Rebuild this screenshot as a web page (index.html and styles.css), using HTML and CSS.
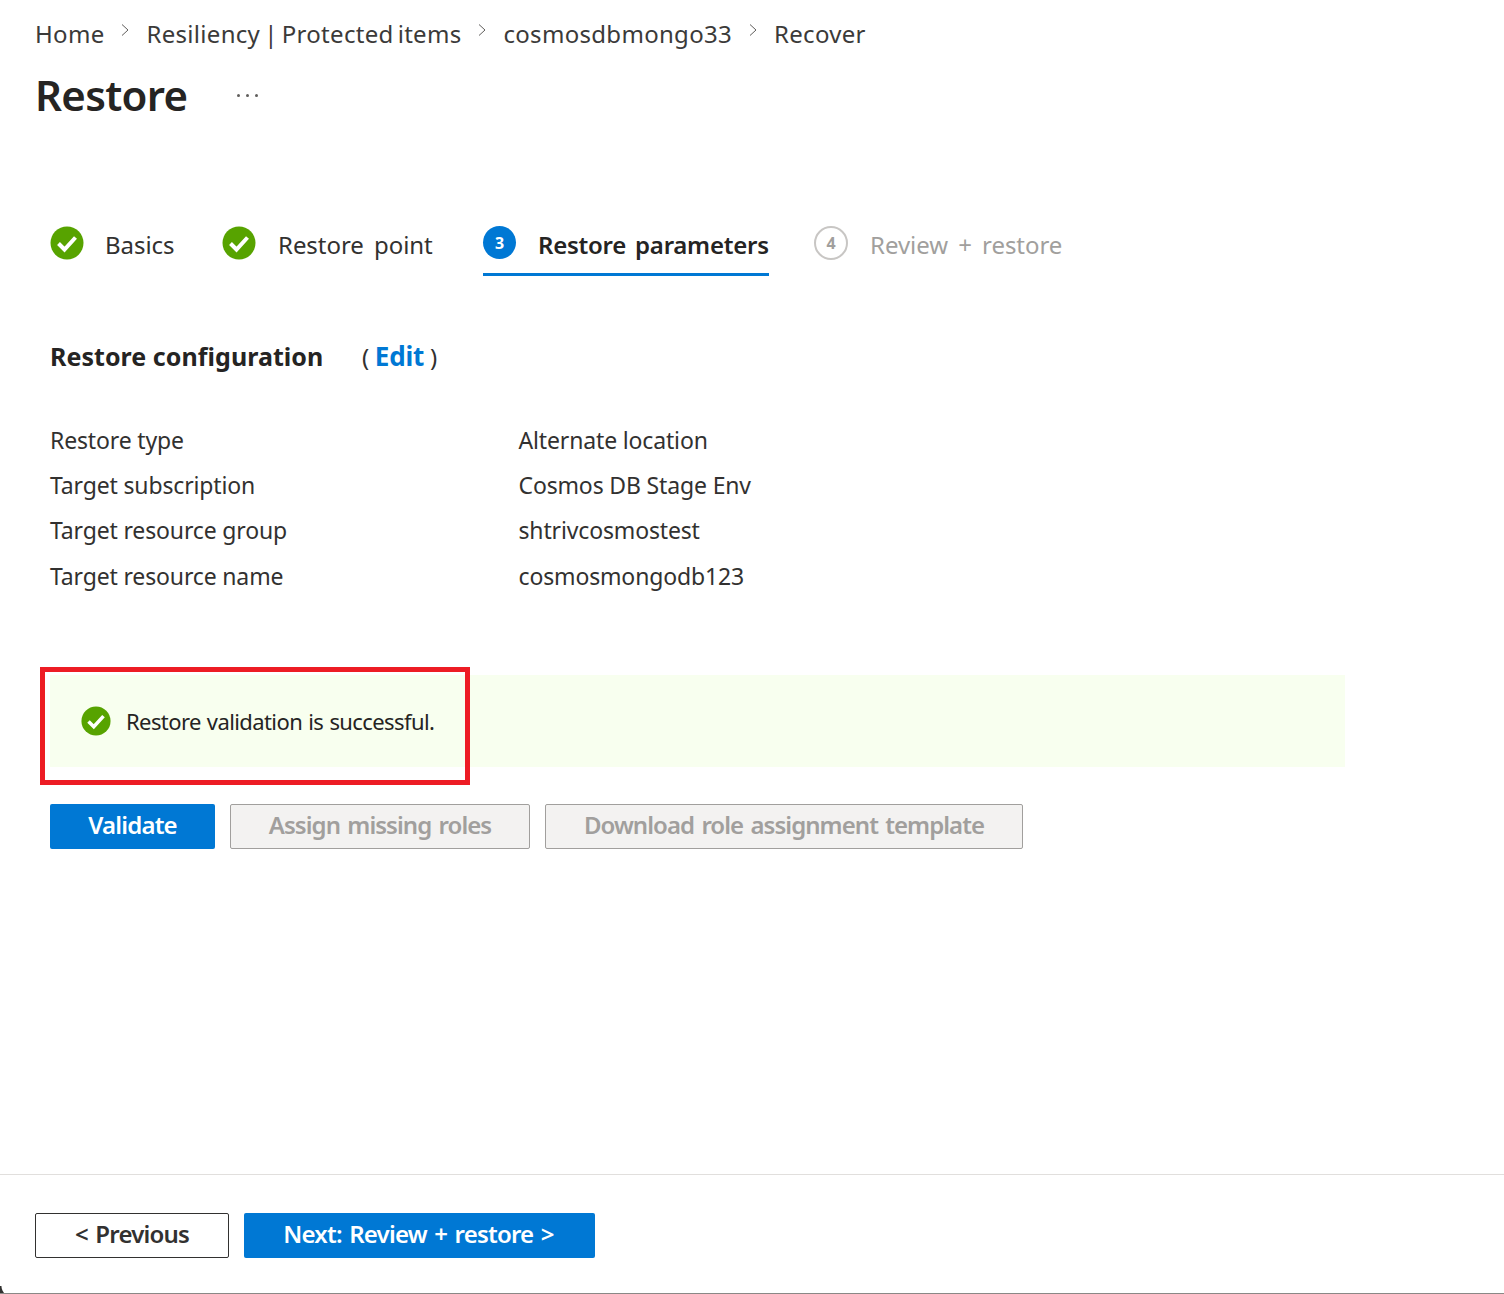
FILE: index.html
```html
<!DOCTYPE html>
<html lang="en">
<head>
<meta charset="UTF-8" />
<title>Restore</title>
<link rel="stylesheet" href="styles.css">
</head>
<body>
<div class="page">
    <div class="top">
        <div class="crumbs">
            <span>Home</span>
            <svg class="chev" width="10" height="14" viewBox="0 0 10 14"><path d="M2 1.5 8 7 2 12.5" /></svg>
            <span>Resiliency | Protected items</span>
            <svg class="chev" width="10" height="14" viewBox="0 0 10 14"><path d="M2 1.5 8 7 2 12.5" /></svg>
            <span>cosmosdbmongo33</span>
            <svg class="chev" width="10" height="14" viewBox="0 0 10 14"><path d="M2 1.5 8 7 2 12.5" /></svg>
            <span>Recover</span>
        </div>
        <div class="title-row">
            <h1>Restore</h1>
            <div class="more"><i></i><i></i><i></i></div>
        </div>
    </div>

    <div class="steps">
        <div class="step step-basics">
            <svg class="ok" width="34" height="34" viewBox="0 0 34 34"><circle cx="17" cy="17" r="16.5" fill="#57a300" /><path d="M8.5 17.5 14.5 23.5 25.5 11.5" fill="none" stroke="#fff" stroke-width="4" /></svg>
            <span>Basics</span>
        </div>
        <div class="step step-point">
            <svg class="ok" width="34" height="34" viewBox="0 0 34 34"><circle cx="17" cy="17" r="16.5" fill="#57a300" /><path d="M8.5 17.5 14.5 23.5 25.5 11.5" fill="none" stroke="#fff" stroke-width="4" /></svg>
            <span>Restore point</span>
        </div>
        <div class="step step-active">
            <div class="num num-blue">3</div>
            <span>Restore parameters</span>
        </div>
        <div class="step step-off">
            <div class="num num-off">4</div>
            <span>Review + restore</span>
        </div>
    </div>

    <div class="config-head">
        <h2>Restore configuration</h2>
        <div class="edit">( <a href="#">Edit</a> )</div>
    </div>

    <div class="details">
        <div>Restore type</div><div>Alternate location</div>
        <div>Target subscription</div><div>Cosmos DB Stage Env</div>
        <div>Target resource group</div><div>shtrivcosmostest</div>
        <div>Target resource name</div><div>cosmosmongodb123</div>
    </div>

    <div class="banner">
        <svg width="30" height="30" viewBox="0 0 34 34"><circle cx="17" cy="17" r="16.5" fill="#57a300" /><path d="M8.5 17.5 14.5 23.5 25.5 11.5" fill="none" stroke="#fff" stroke-width="4" /></svg>
        <span>Restore validation is successful.</span>
        <div class="redbox"></div>
    </div>

    <div class="actions">
        <button class="btn primary btn-validate">Validate</button>
        <button class="btn off btn-assign">Assign missing roles</button>
        <button class="btn off btn-download">Download role assignment template</button>
    </div>

    <div class="footer">
        <button class="btn outline btn-prev">&lt; Previous</button>
        <button class="btn primary btn-next">Next: Review + restore &gt;</button>
    </div>
    <div class="corner"></div>
</div>
</body>
</html>
```

FILE: styles.css
```css
*{
    box-sizing: border-box;
}
body{
    margin: 0;
    background-color: white;
    font-family: "Noto Sans", "Open Sans", sans-serif;
    color: #323130;
}
.page{
    position: relative;
    height: 1294px;
    display: flex;
    flex-direction: column;
    border-bottom: 1px solid #8a8886;
    overflow: hidden;
}
.top{
    padding: 16px 0 0 35px;
}
.crumbs{
    display: flex;
    align-items: center;
    height: 34px;
    font-size: 24px;
    letter-spacing: 0.3px;
    word-spacing: -2.5px;
    color: #3b3a39;
}
.chev{
    margin: -6px 16px 0 16px;
}
.chev path{
    fill: none;
    stroke: #605e5c;
    stroke-width: 1;
}
.title-row{
    display: flex;
    align-items: center;
    margin-top: 14px;
    height: 60px;
}
h1{
    margin: 0;
    font-size: 42px;
    font-weight: 600;
    letter-spacing: -0.7px;
    color: #252423;
}
.more{
    display: flex;
    gap: 6px;
    margin-left: 50px;
    margin-top: 2px;
}
.more i{
    width: 3px;
    height: 3px;
    border-radius: 50%;
    background-color: #605e5c;
}
.steps{
    display: flex;
    margin: 88px 0 0 50px;
    height: 64px;
}
.step{
    display: flex;
    align-items: flex-start;
    gap: 22px;
    padding-top: 14px;
    font-size: 24px;
    letter-spacing: -0.05px;
    word-spacing: 4px;
    white-space: nowrap;
}
.step span{
    margin-top: 2px;
}
.step-basics{
    width: 172px;
}
.step-basics span{
    margin-left: -1px;
}
.step-point{
    width: 261px;
}
.step-active{
    width: 286px;
    font-weight: 600;
    letter-spacing: -0.25px;
    word-spacing: 3px;
    border-bottom: 3px solid #0078d4;
    color: #252423;
}
.step-off{
    margin-left: 45px;
    color: #a19f9d;
}
.num{
    width: 34px;
    height: 34px;
    border-radius: 50%;
    display: flex;
    justify-content: center;
    align-items: center;
    font-size: 16px;
    font-weight: 700;
    letter-spacing: 0;
}
.num-blue{
    width: 33px;
    height: 33px;
    background-color: #0078d4;
    color: white;
}
.num-off{
    border: 2px solid #c8c6c4;
    color: #a19f9d;
}
.config-head{
    display: flex;
    align-items: center;
    margin: 61px 0 0 50px;
    height: 38px;
}
h2{
    margin: 0;
    width: 312px;
    font-size: 25px;
    font-weight: 700;
    letter-spacing: 0.05px;
    color: #252423;
}
.edit{
    font-size: 24px;
    letter-spacing: -0.3px;
}
.edit a{
    color: #0078d4;
    font-size: 26px;
    font-weight: 700;
    letter-spacing: -0.2px;
    text-decoration: none;
}
.details{
    display: grid;
    grid-template-columns: 468.5px 1fr;
    grid-auto-rows: 45.3px;
    align-items: center;
    margin: 42px 0 0 50px;
    font-size: 23px;
    letter-spacing: -0.15px;
}
.banner{
    position: relative;
    display: flex;
    align-items: center;
    gap: 15px;
    width: 1295px;
    height: 92px;
    margin: 77px 0 0 50px;
    padding-left: 31px;
    background-color: #f8ffef;
    font-size: 22px;
    letter-spacing: -0.6px;
    word-spacing: 1px;
    color: #252423;
}
.redbox{
    position: absolute;
    left: -10px;
    top: -8px;
    width: 430px;
    height: 118px;
    border: 5px solid #ed1c24;
}
.actions{
    display: flex;
    gap: 15px;
    margin: 37px 0 0 50px;
}
.btn{
    height: 45px;
    border-radius: 2px;
    border: 1px solid transparent;
    font-family: inherit;
    font-size: 24px;
    font-weight: 600;
    letter-spacing: -0.8px;
    word-spacing: 2px;
    padding: 0 0 4px;
}
.primary{
    background-color: #0078d4;
    color: white;
}
.off{
    background-color: #f3f2f1;
    border-color: #a19f9d;
    color: #a19f9d;
    letter-spacing: -0.95px;
}
.outline{
    background-color: white;
    border-color: #323130;
    color: #323130;
}
.btn-validate{
    width: 165px;
}
.btn-assign{
    width: 300px;
}
.btn-download{
    width: 478px;
}
.footer{
    display: flex;
    gap: 15px;
    margin-top: auto;
    height: 119px;
    padding: 38px 0 0 35px;
    border-top: 1px solid #e1dfdd;
}
.footer .btn{
    padding-bottom: 5px;
}
.btn-prev{
    width: 194px;
}
.btn-next{
    width: 351px;
}
.btn-next{
    padding-right: 2px;
}
.corner{
    position: absolute;
    left: 0;
    bottom: 0;
    width: 12px;
    height: 7px;
    background: radial-gradient(circle at 100% 0, transparent 10px, #323130 11px);
}
```
